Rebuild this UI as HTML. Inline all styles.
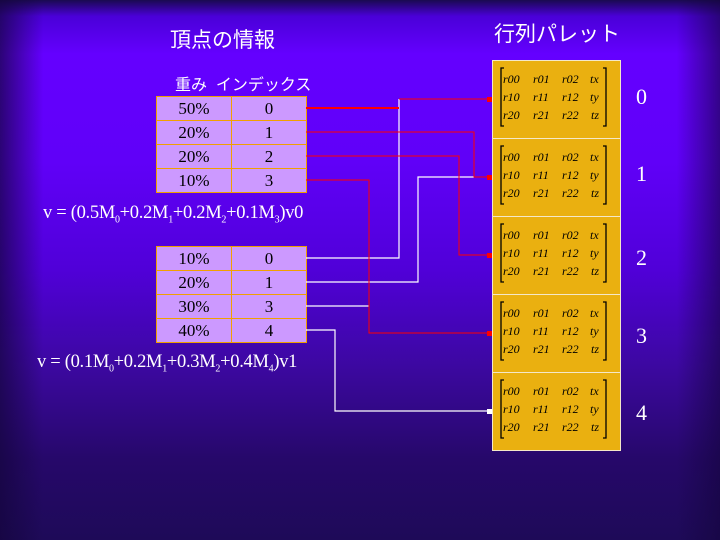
<!DOCTYPE html><html><head><meta charset="utf-8"><style>
body{margin:0;width:720px;height:540px;overflow:hidden;position:relative;font-family:"Liberation Serif",serif;
background:linear-gradient(180deg,#1a0a50 0%,#4a00d8 3%,#6400ff 10%,#6000f8 30%,#5000d8 50%,#3c08a0 68%,#26086a 85%,#1e0a58 100%);}
.lv{position:absolute;left:0;top:0;width:720px;height:540px;background:linear-gradient(90deg,rgba(20,5,60,.7) 0%,rgba(20,5,60,0) 6%,rgba(20,5,60,0) 94%,rgba(20,5,60,.6) 100%);}
.t{position:absolute;color:#fff;white-space:nowrap}
.jp{font-family:"Liberation Sans","Noto Sans CJK JP",sans-serif}
table{position:absolute;border-collapse:collapse;background:#cc99ff}
td{border:1px solid #f0a000;width:74px;height:23px;padding:0;text-align:center;font-size:17px;color:#000;line-height:23px}
.m{position:absolute;left:492px;width:127px;height:77px;background:#eab010;border:1px solid #f4e8c8}
.n{position:absolute;left:636px;color:#fff;font-size:22px}
sub{font-size:10px}
</style></head><body><div class="lv"></div>
<div class="t jp" style="left:170px;top:24px;font-size:21px">頂点の情報</div>
<div class="t jp" style="left:494px;top:18px;font-size:21px">行列パレット</div>
<div class="t jp" style="left:175px;top:71px;font-size:16px">重み&nbsp; インデックス</div>
<table style="left:156px;top:96px"><tr><td>50%</td><td>0</td></tr><tr><td>20%</td><td>1</td></tr><tr><td>20%</td><td>2</td></tr><tr><td>10%</td><td>3</td></tr></table>
<table style="left:156px;top:246px"><tr><td>10%</td><td>0</td></tr><tr><td>20%</td><td>1</td></tr><tr><td>30%</td><td>3</td></tr><tr><td>40%</td><td>4</td></tr></table>
<div class="t" style="left:43px;top:203px;font-size:18.5px;letter-spacing:-0.3px">v = (0.5M<sub>0</sub>+0.2M<sub>1</sub>+0.2M<sub>2</sub>+0.1M<sub>3</sub>)v0</div>
<div class="t" style="left:37px;top:352px;font-size:18.5px;letter-spacing:-0.3px">v = (0.1M<sub>0</sub>+0.2M<sub>1</sub>+0.3M<sub>2</sub>+0.4M<sub>4</sub>)v1</div>
<div class="m" style="top:60px"></div><div class="m" style="top:138px"></div><div class="m" style="top:216px"></div><div class="m" style="top:294px"></div><div class="m" style="top:372px"></div>
<div class="n" style="top:84px">0</div><div class="n" style="top:161px">1</div><div class="n" style="top:245px">2</div><div class="n" style="top:323px">3</div><div class="n" style="top:400px">4</div>
<svg style="position:absolute;left:0;top:0" width="720" height="540">
<g fill="none" stroke="#fff" stroke-width="1.2">
<path d="M306 258H399V99"/><path d="M306 282H418V177H474"/><path d="M306 306H369"/><path d="M306 330H335V411H490"/>
</g>
<g fill="none" stroke="#f00" stroke-width="1">
<path d="M306 108H399" stroke-width="2"/><path d="M399 99H490"/><path d="M306 132H474V177H490"/><path d="M306 156H459V255H490"/><path d="M306 180H369V333H490"/>
</g>
<g fill="#f00"><rect x="487" y="97" width="5" height="5"/><rect x="487" y="175" width="5" height="5"/><rect x="487" y="253" width="5" height="5"/><rect x="487" y="331" width="5" height="5"/></g>
<rect x="487" y="409" width="5" height="5" fill="#fff"/>
</svg>
<svg style="position:absolute;left:0;top:0" width="720" height="540" font-family="Liberation Serif,serif" font-style="italic" font-size="12">
<g id="g0">
<path d="M504 68H501V126H504M603 68H606V126H603" stroke="#000" stroke-width="1.3" fill="none"/>
<text x="503" y="83">r00</text><text x="533" y="83">r01</text><text x="562" y="83">r02</text><text x="590" y="83">tx</text>
<text x="503" y="101">r10</text><text x="533" y="101">r11</text><text x="562" y="101">r12</text><text x="590" y="101">ty</text>
<text x="503" y="119">r20</text><text x="533" y="119">r21</text><text x="562" y="119">r22</text><text x="591" y="119">tz</text>
</g>
<use href="#g0" y="78"/><use href="#g0" y="156"/><use href="#g0" y="234"/><use href="#g0" y="312"/>
</svg>
</body></html>
